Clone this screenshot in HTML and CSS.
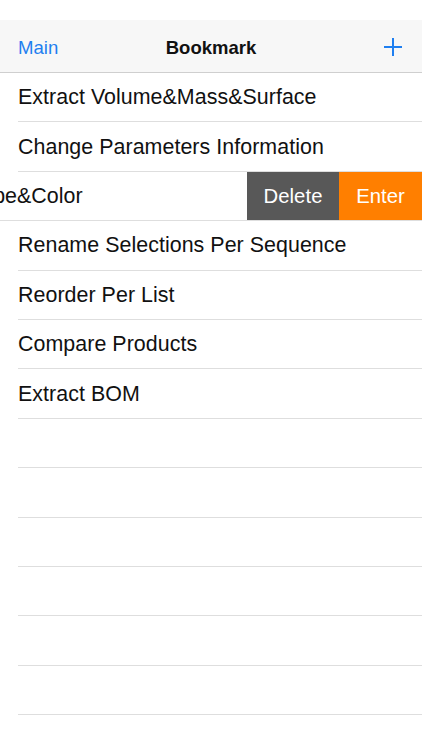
FILE: index.html
```html
<!DOCTYPE html>
<html>
<head>
<meta charset="utf-8">
<link rel="stylesheet" href="styles.css">
</head>
<body>
<div class="status"></div>
<header class="nav">
  <span class="nav-left">Main</span>
  <span class="nav-title">Bookmark</span>
  <span class="nav-right">
    <svg width="20" height="20" viewBox="0 0 20 20"><path d="M10 1V19M1 10H19" stroke="#1f7ff0" stroke-width="2" fill="none"/></svg>
  </span>
</header>
<ul class="list">
  <li class="row"><span class="label">Extract Volume&amp;Mass&amp;Surface</span></li>
  <li class="row"><span class="label">Change Parameters Information</span></li>
  <li class="row swiped">
    <span class="label shifted">Change Line Type&amp;Color</span>
    <span class="actions"><span class="btn delete">Delete</span><span class="btn enter">Enter</span></span>
  </li>
  <li class="row"><span class="label">Rename Selections Per Sequence</span></li>
  <li class="row"><span class="label">Reorder Per List</span></li>
  <li class="row"><span class="label">Compare Products</span></li>
  <li class="row"><span class="label">Extract BOM</span></li>
  <li class="row"></li>
  <li class="row"></li>
  <li class="row"></li>
  <li class="row"></li>
  <li class="row"></li>
  <li class="row"></li>
  <li class="row"></li>
</ul>
</body>
</html>
```
FILE: styles.css
```css
* { box-sizing: border-box; }
html, body { margin: 0; padding: 0; background: #fff; }
body {
  width: 422px;
  height: 750px;
  overflow: hidden;
  font-family: "Liberation Sans", Arial, sans-serif;
  color: #111;
}
.status { height: 20px; background: #fff; }
.nav {
  height: 53px;
  background: #f7f7f7;
  border-bottom: 1px solid #cfcfcf;
  display: grid;
  grid-template-columns: 1fr auto 1fr;
  align-items: center;
  padding: 0 18px;
}
.nav-left { color: #1f7ff0; font-size: 18.6px; justify-self: start; padding-top: 3px; }
.nav-title { font-size: 18.5px; font-weight: bold; color: #111; padding-top: 3px; }
.nav-right { justify-self: end; display: flex; align-items: center; margin-right: 1px; padding-top: 1px; }
.list { list-style: none; margin: 0; padding: 0 0 0 18px; }
.row {
  height: 49.4px;
  border-bottom: 1px solid #dedede;
  display: flex;
  align-items: center;
  padding-top: 1px;
  font-size: 21.4px;
  letter-spacing: 0.05px;
  white-space: nowrap;
  position: relative;
}
.swiped { margin-left: -18px; padding-left: 18px; overflow: hidden; }
.shifted { margin-left: -175px; }
.actions {
  position: absolute;
  right: 0; top: 0; bottom: 0;
  display: flex;
}
.btn {
  display: flex; align-items: center; justify-content: center;
  color: #fff; font-size: 20.3px; height: 100%; padding-top: 2px;
}
.delete { background: #585858; width: 92px; }
.enter { background: #ff7f00; width: 83px; }
```
